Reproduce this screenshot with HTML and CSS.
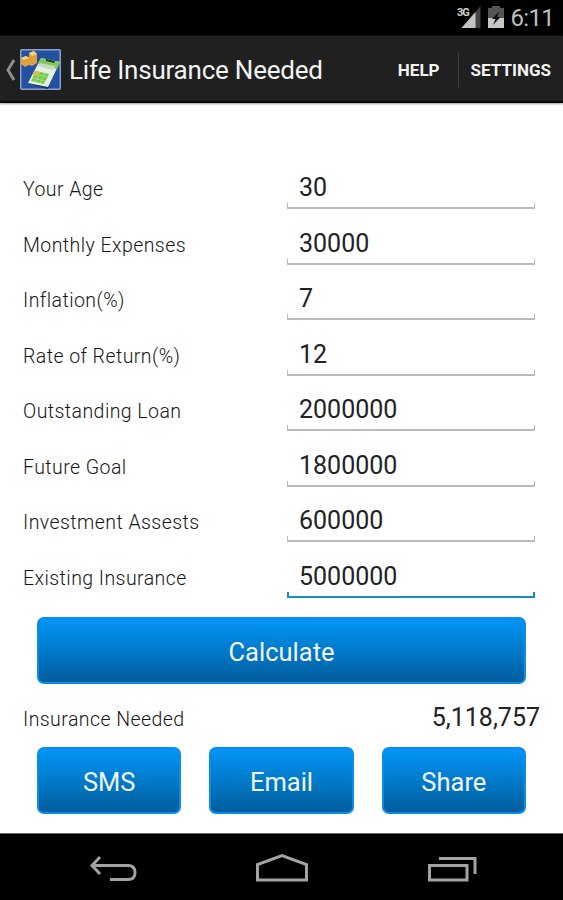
FILE: index.html
```html
<!DOCTYPE html>
<html lang="en">
<head>
<meta charset="utf-8">
<title>Life Insurance Needed</title>
<link rel="stylesheet" href="styles.css">
</head>
<body>
<div class="status">
  <svg class="signal" width="26" height="24" viewBox="0 0 26 24">
    <path d="M23.500 0v22H4.500z" fill="#444"/>
    <path d="M18.500 6v16H4.500z" fill="#c4c4c4"/>
    <path d="M0 0h13v11H0z" fill="#000"/>
    <text x="0" y="10" class="network">3G</text>
  </svg>
  <svg class="battery" width="16" height="22" viewBox="0 0 16 22">
    <path d="M4 0h8v2h4v20H0V2h4z" fill="#555"/>
    <path d="M0 12h16v10H0z" fill="#c8c8c8"/>
    <path d="M11.500 5L4 13h3.500l-2.500 6 7.500-8H9z" fill="#111"/>
  </svg>
  <span class="time">6:11</span>
</div>
<header class="bar">
  <svg class="up" width="11" height="22" viewBox="0 0 11 22"><path d="M9 1L3 11l6 10" fill="none" stroke="#8d8d8d" stroke-width="3"/></svg>
  <svg class="logo" width="41" height="41" viewBox="0 0 41 41">
    <rect x=".75" y=".75" width="39.500" height="39.500" rx="1" fill="#2450a4" stroke="#8ba0c8" stroke-width="1.500"/>
    <path d="M1 9l5-2 3 1V4l5-2 3 3v9l-5 3-3-1-4 2-4-3z" fill="#dda23f"/>
    <path d="M1 9l5-2 3 2-5 2zM9 4l5-2 3 3-5 2z" fill="#f5d282"/>
    <path d="M8 34l15 5 5 1 2-3-5-2z" fill="#173775"/>
    <path d="M21 9l19 4-12 25-20-4z" fill="#e4f0dc"/>
    <path d="M21 9l19 4-3 7-19-5z" fill="#83c85c"/>
    <path d="M20 14l15 3-2 4-15-4z" fill="#c3dac5"/>
    <path d="M26 10l9 2-1 2-8-2z" fill="#263825"/>
    <path d="M16 22l13 3-5 10-13-3z" fill="#77c84e"/>
    <path d="M14 25l13 3M12 29l13 3M20 23l-5 10M25 24l-5 10" stroke="#a5dc7e" fill="none"/>
    <path d="M14 22l5 1-2 4-5-1z" fill="#dfb94c"/>
  </svg>
  <h1 class="title">Life Insurance Needed</h1>
  <span class="action help">HELP</span>
  <span class="action settings">SETTINGS</span>
</header>
<main class="content">
  <div class="row"><span class="label age">Your Age</span><span class="field">30</span></div>
  <div class="row"><span class="label">Monthly Expenses</span><span class="field">30000</span></div>
  <div class="row"><span class="label">Inflation(%)</span><span class="field">7</span></div>
  <div class="row"><span class="label">Rate of Return(%)</span><span class="field">12</span></div>
  <div class="row"><span class="label">Outstanding Loan</span><span class="field">2000000</span></div>
  <div class="row"><span class="label">Future Goal</span><span class="field">1800000</span></div>
  <div class="row"><span class="label">Investment Assests</span><span class="field">600000</span></div>
  <div class="row"><span class="label">Existing Insurance</span><span class="field focused">5000000</span></div>
  <div class="buttons"><button class="button">Calculate</button></div>
  <div class="result"><span class="label">Insurance Needed</span><span class="total">5,118,757</span></div>
  <div class="buttons share"><button class="button">SMS</button><button class="button">Email</button><button class="button">Share</button></div>
</main>
<nav class="nav">
  <svg width="563" height="66" viewBox="0 0 563 66" fill="none" stroke="#a3a3a3" stroke-width="3">
    <path d="M100 23l-8 8.500 8 8.500M92 31.500h36q7 0 7 7t-7 7h-18"/>
    <path d="M257.500 46V30.500L282 21.500l24.500 9V46z"/>
    <path d="M429.500 31.500h37.500V46h-37.500zM439 24.500h36V40"/>
  </svg>
</nav>
</body>
</html>
```

FILE: styles.css
```css
* { box-sizing: border-box; }
body {
  margin: 0;
  width: 563px;
  height: 900px;
  display: flex;
  flex-direction: column;
  background: #fff;
  font-family: Roboto, sans-serif;
  overflow: hidden;
}
.status {
  height: 36px;
  background: #000;
  display: flex;
  align-items: flex-start;
  justify-content: flex-end;
  padding: 6px 9px 0 0;
}
.signal { margin: 0 5px 0 0; }
.battery { margin: 0 7px 0 0; }
.network { font: bold 11px Roboto, sans-serif; fill: #d0d0d0; letter-spacing: -1px; }
.time { color: #bebebe; font-size: 24px; line-height: 25px; letter-spacing: -.7px; }
.bar {
  height: 67px;
  background: #202020;
  border-bottom: 2px solid #080808;
  box-shadow: 0 1px 2px #999;
  display: flex;
  align-items: center;
  padding: 2px 12px 0 5px;
  color: #f3f3f3;
}
.up { margin-right: 4px; }
.title { margin: 0 auto 0 8px; font-size: 26px; font-weight: 400; line-height: 34px; letter-spacing: -.22px; white-space: nowrap; }
.action { font-size: 17px; font-weight: 700; line-height: 34px; }
.settings { margin-left: 18px; padding-left: 12px; border-left: 1px solid #3d3d3d; }
.content { height: 730px; padding: 50.4px 0 0; }
.row { height: 55.57px; display: flex; align-items: flex-end; padding: 0 28px 0 23px; }
.label { flex: 1; color: #161616; font-size: 19.5px; font-weight: 300; line-height: 24px; letter-spacing: .44px; }
.row .label { padding-bottom: 7px; }
.field {
  position: relative;
  width: 248px;
  height: 37px;
  padding-left: 12px;
  color: #222;
  font-size: 25px;
  line-height: 31px;
  border-bottom: 2px solid #bbb;
}
.field::before {
  content: "";
  position: absolute;
  inset: auto 0 0;
  height: 4px;
  border: solid #bbb;
  border-width: 0 1px;
}
.focused, .focused::before { border-color: #198cc5; }
.focused::before { border-width: 0 2px; }
.buttons { display: flex; gap: 28px; padding: 0 37px; margin-top: 19px; }
.button {
  flex: 1;
  height: 67px;
  padding: 3px 0 0;
  border: 2px solid #098cf0;
  border-radius: 7px;
  background: linear-gradient(#0396f7, #005d9c);
  color: #f2f5ff;
  font: 400 25.5px/34px Roboto, sans-serif;
}
.result { height: 63px; display: flex; align-items: center; padding: 6px 23px 0; }
.result .label { padding-top: 3px; }
.total { color: #222; font-size: 25px; line-height: 30px; }
.share { margin-top: 0; }
.nav { height: 67px; background: #000; border-top: 1px solid #666; }
.nav svg { display: block; }
```
